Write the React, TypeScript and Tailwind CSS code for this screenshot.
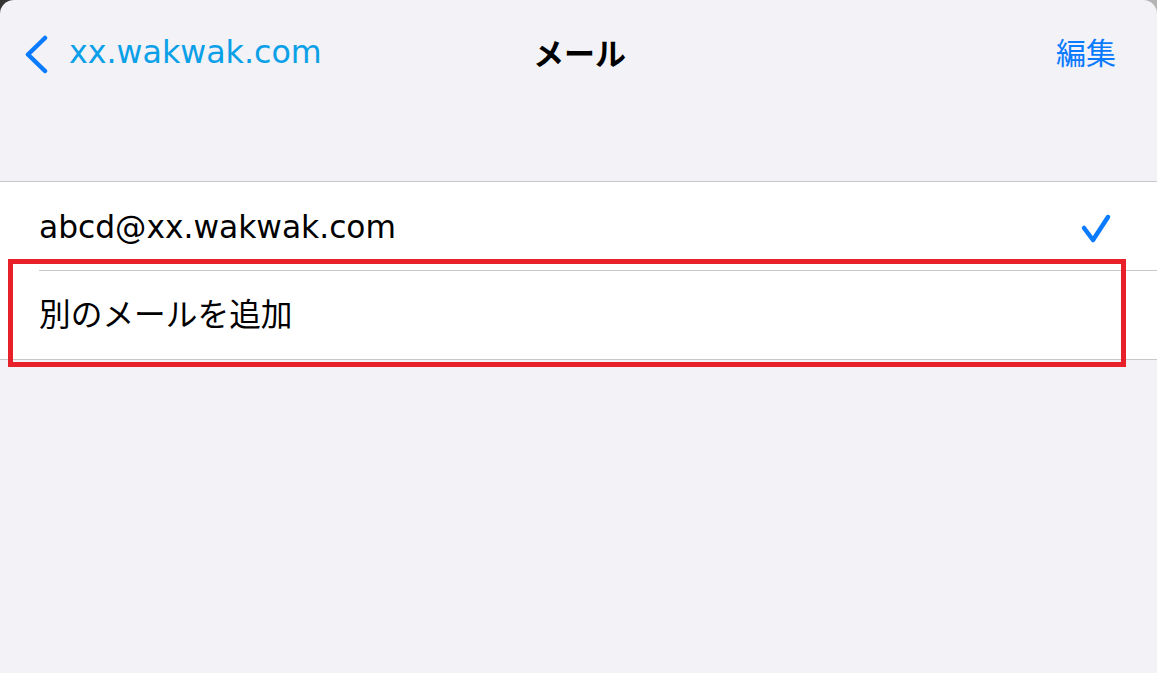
export default function App() {
  const font = { fontFamily: '"DejaVu Sans", "Noto Sans CJK JP", sans-serif' };

  return (
    <div className="relative w-[1157px] h-[673px] bg-gradient-to-r from-[#333] via-[#aaa] to-[#b4b4b4]" style={font}>
      <div className="w-full h-full bg-[#f2f2f7] rounded-t-[14px] overflow-hidden flex flex-col">
        {/* Nav bar */}
        <div className="relative h-[108px] flex items-center justify-between px-[24px]">
          <button className="flex items-center gap-[19px] text-[#0aa0e8] text-[31.7px] leading-none">
            <svg width="26" height="40" viewBox="0 0 26 40" className="mt-[1px]">
              <path
                d="M21 3 L4 19.5 L21 36"
                fill="none"
                stroke="#0a7aff"
                strokeWidth={4.5}
                strokeLinecap="round"
                strokeLinejoin="round"
              />
            </svg>
            <span className="-mt-[2px]">xx.wakwak.com</span>
          </button>
          <h1 className="absolute left-1/2 -translate-x-1/2 ml-[1px] text-[31px] font-bold text-black leading-none">
            メール
          </h1>
          <button className="text-[#0a7aff] text-[30px] leading-none mr-[17px]">編集</button>
        </div>

        <div className="h-[73px]" />

        {/* List */}
        <div className="bg-white border-t border-b border-[#c8c8cc]">
          <div className="flex items-center justify-between h-[88px] pl-[39px] pr-[44px]">
            <span className="text-[31.3px] text-black leading-none mt-[4px]">abcd@xx.wakwak.com</span>
            <svg width="34" height="32" viewBox="0 0 34 32" className="mt-[6px]">
              <path
                d="M5 15 L14 27 L29 4"
                fill="none"
                stroke="#0a7aff"
                strokeWidth={4.5}
                strokeLinecap="round"
                strokeLinejoin="round"
              />
            </svg>
          </div>
          <div className="ml-[39px] border-t border-[#c8c8cc]">
            <div className="flex items-center h-[88px]">
              <span className="text-[31.7px] text-black leading-none mt-[2px]">別のメールを追加</span>
            </div>
          </div>
        </div>
      </div>
      {/* Highlight annotation */}
      <div className="absolute left-[8px] top-[259px] w-[1118px] h-[108px] border-[5px] border-[#e8202a] pointer-events-none" />
    </div>
  );
}
